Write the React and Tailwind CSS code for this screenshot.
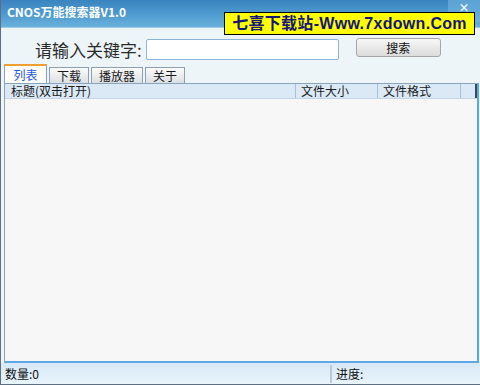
import React from 'react';

const cjk = { fontFamily: '"Noto Sans CJK SC", "Liberation Sans", sans-serif' };
const latin = { fontFamily: '"Liberation Sans", "Noto Sans CJK SC", sans-serif' };

function Tab({ label, active }) {
  if (active) {
    return (
      <div className="h-[19px] w-[43px] flex items-center justify-center bg-white border border-[#8aa4bd] border-b-0 border-t-2 border-t-[#f0a030] text-[12px] text-[#2357d8] leading-none">
        {label}
      </div>
    );
  }
  return (
    <div className="h-[16px] flex items-center justify-center bg-gradient-to-b from-[#fbfbfb] to-[#dcdfe3] border border-[#8e9fb0] border-b-0 text-[12px] text-[#1a1a1a] leading-none px-[7px]">
      {label}
    </div>
  );
}

export default function App() {
  return (
    <div
      className="relative w-[480px] h-[385px] overflow-hidden flex flex-col bg-[#edf5f8] border-l border-b border-[#5d6f80]"
      style={cjk}
    >
      {/* title bar */}
      <div className="h-[28px] flex items-start bg-gradient-to-b from-[#3a84bf] via-[#4d99cf] to-[#6ab2dc] border-b border-[#9ccbe8]">
        <span className="pl-[6px] pt-[6px] text-[12px] font-bold text-white leading-none">CNOS万能搜索器V1.0</span>
        <div className="ml-auto w-[32px] h-[22px] flex items-start justify-center bg-[#73b6df]/60">
          <span className="text-white text-[11px] font-bold leading-none pt-[2px]">×</span>
        </div>
      </div>

      {/* banner */}
      <div
        className="absolute left-[223px] top-[12px] w-[251px] h-[23px] bg-[#ffff00] border border-black flex items-center justify-center"
        style={latin}
      >
        <span className="whitespace-nowrap text-[16px] font-bold text-[#14147a] leading-none tracking-[0.3px]">七喜下载站-Www.7xdown.Com</span>
      </div>

      {/* search row */}
      <div className="h-[36px] flex items-start pt-[10px]">
        <span className="ml-[34px] mt-[1px] text-[17px] text-[#2b2b2b] leading-[21px] whitespace-nowrap">请输入关键字:</span>
        <div className="ml-[4px] mt-[1px] w-[193px] h-[21px] bg-white border border-[#8bb4d8] rounded-[2px]" />
        <button className="ml-[17px] w-[85px] h-[19px] flex items-center justify-center bg-gradient-to-b from-[#f7f7f7] to-[#dcdcdc] border border-[#a6a6a6] rounded-[3px] text-[12px] text-[#111] leading-none">
          搜索
        </button>
      </div>

      {/* tabs */}
      <div className="h-[19px] flex items-end pl-[3px] gap-[2px]">
        <Tab label="列表" active />
        <Tab label="下载" />
        <Tab label="播放器" />
        <Tab label="关于" />
      </div>

      {/* list panel */}
      <div className="flex-1 ml-[3px] mr-[1px] flex flex-col bg-[#f7f7f7] border border-[#8aa4bd] border-r-2 border-r-[#5aa9e6] border-b-2 border-b-[#5aa9e6]">
        <div className="h-[15px] flex bg-[#dbe9f6] border-b border-[#c2d6e8] text-[12px] text-[#1a1a1a] leading-[14px]">
          <div className="w-[291px] pl-[6px] border-r border-[#a9c0d6]">标题(双击打开)</div>
          <div className="w-[82px] pl-[5px] border-r border-[#a9c0d6]">文件大小</div>
          <div className="w-[83px] pl-[5px] border-r border-[#a9c0d6]">文件格式</div>
          <div className="flex-1" />
          <div className="w-[2px] bg-[#3b4a5a]" />
        </div>
        <div className="flex-1" />
      </div>

      {/* status bar */}
      <div className="h-[21px] flex items-center bg-gradient-to-b from-[#d7e8f6] to-[#e9f4fa] text-[12px] text-[#111] leading-none">
        <div className="w-[329px] pl-[4px]">数量:0</div>
        <div className="w-[2px] h-[18px] bg-[#b8c9d8]" />
        <div className="pl-[4px]">进度:</div>
      </div>
    </div>
  );
}
